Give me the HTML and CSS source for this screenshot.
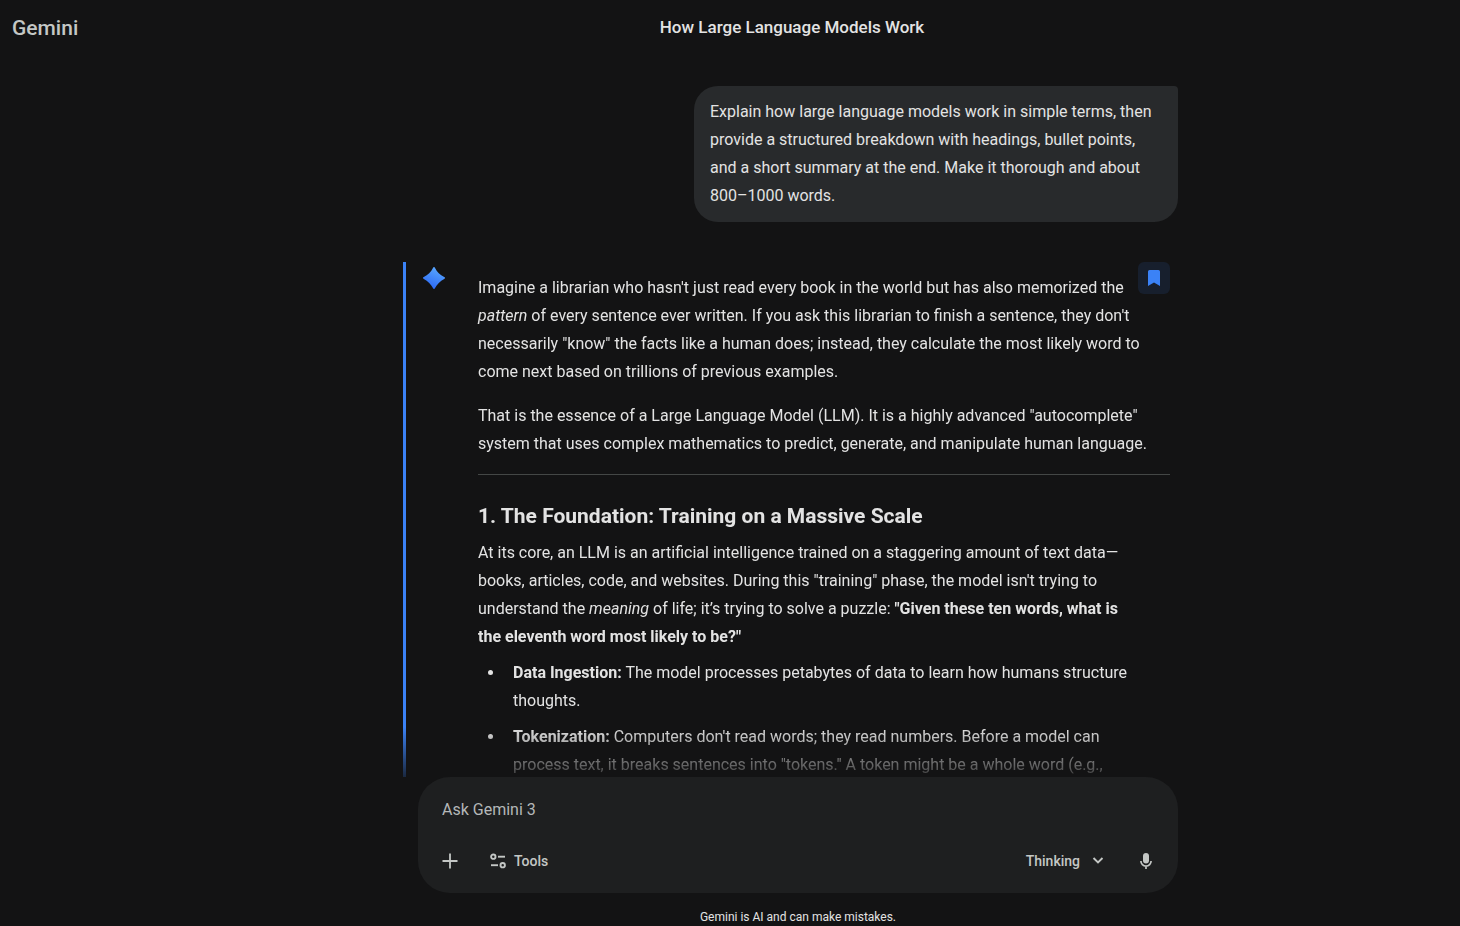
FILE: index.html
```html
<!DOCTYPE html>
<html lang="en">
<head>
    <meta charset="UTF-8">
    <meta name="viewport" content="width=device-width, initial-scale=1">
    <title>Gemini</title>
    <link rel="stylesheet" href="styles.css">
</head>
<body>
    <header class="topbar">
        <a class="logo" href="#">Gemini</a>
        <h1 class="chat-title">How Large Language Models Work</h1>
    </header>

    <main class="main">
        <section class="chat">
            <div class="chat-inner">
                <div class="user-message">
                    <p>Explain how large language models work in simple terms, then provide a structured breakdown with headings, bullet points, and a short summary at the end. Make it thorough and about 800–1000 words.</p>
                </div>

                <article class="response">
                    <svg class="spark" viewBox="0 0 24 24" aria-hidden="true">
                        <defs>
                            <linearGradient id="spark-fill" x1="0.3" y1="1" x2="0.7" y2="0">
                                <stop offset="0" stop-color="#2a66f5"/>
                                <stop offset="1" stop-color="#5aa9ff"/>
                            </linearGradient>
                        </defs>
                        <path fill="url(#spark-fill)" d="M12 1c.5 0 .8.3.9.8C15 5.900 18.100 9 22.200 11.100c.5.1.8.4.8.900s-.3.800-.8.900C18.100 15 15 18.100 12.900 22.200c-.1.500-.4.800-.9.800s-.8-.3-.9-.8C9 18.100 5.900 15 1.800 12.900c-.5-.1-.8-.4-.8-.9s.3-.8.8-.9C5.900 9 9 5.900 11.100 1.800c.1-.5.4-.8.9-.8z"/>
                    </svg>

                    <div class="response-text">
                        <p>Imagine a librarian who hasn't just read every book in the world but has also memorized the <em>pattern</em> of every sentence ever written. If you ask this librarian to finish a sentence, they don't necessarily "know" the facts like a human does; instead, they calculate the most likely word to come next based on trillions of previous examples.</p>
                        <p>That is the essence of a Large Language Model (LLM). It is a highly advanced "autocomplete" system that uses complex mathematics to predict, generate, and manipulate human language.</p>
                        <hr>
                        <h3>1. The Foundation: Training on a Massive Scale</h3>
                        <p>At its core, an LLM is an artificial intelligence trained on a staggering amount of text data—books, articles, code, and websites. During this "training" phase, the model isn't trying to understand the <em>meaning</em> of life; it’s trying to solve a puzzle: <b>"Given these ten words, what is<br>the eleventh word most likely to be?"</b></p>
                        <ul>
                            <li><b>Data Ingestion:</b> The model processes petabytes of data to learn how humans structure thoughts.</li>
                            <li><b>Tokenization:</b> Computers don't read words; they read numbers. Before a model can process text, it breaks sentences into "tokens." A token might be a whole word (e.g.,</li>
                        </ul>
                    </div>

                    <button class="bookmark" type="button" aria-label="Bookmark">
                        <svg width="16" height="16" viewBox="0 0 16 16" aria-hidden="true">
                            <path fill="#3b82f6" d="M3.500 0h9A1.500 1.500 0 0 1 14 1.500V16l-6-3.500L2 16V1.500A1.500 1.500 0 0 1 3.500 0z"/>
                        </svg>
                    </button>
                </article>
            </div>
        </section>

        <form class="composer">
            <input class="prompt" type="text" placeholder="Ask Gemini 3" aria-label="Ask Gemini 3">
            <div class="composer-row">
                <button class="icon-btn" type="button" aria-label="Add files">
                    <svg width="16" height="16" viewBox="0 0 16 16" fill="none" stroke="currentColor" stroke-width="1.800" aria-hidden="true">
                        <path d="M8 .500v15M.500 8h15"/>
                    </svg>
                </button>
                <button class="tools-btn" type="button">
                    <svg width="16" height="16" viewBox="0 0 16 16" fill="none" stroke="currentColor" stroke-width="1.900" aria-hidden="true">
                        <circle cx="3.300" cy="3.700" r="2.200"/>
                        <path d="M8 3.700h7"/>
                        <path d="M1 12.200h7"/>
                        <circle cx="12.700" cy="12.200" r="2.200"/>
                    </svg>
                    Tools
                </button>
                <button class="mode-btn" type="button" aria-haspopup="menu">
                    Thinking
                    <svg width="12" height="12" viewBox="0 0 12 12" fill="none" stroke="currentColor" stroke-width="1.900" aria-hidden="true">
                        <path d="M1.500 3 6 7.500 10.500 3"/>
                    </svg>
                </button>
                <button class="icon-btn" type="button" aria-label="Use microphone">
                    <svg width="12" height="16" viewBox="0 0 12 16" aria-hidden="true">
                        <rect x="3" y="0" width="6" height="10.500" rx="3" fill="currentColor"/>
                        <path d="M.900 8a5.100 5.100 0 0 0 10.200 0M6 13v3" fill="none" stroke="currentColor" stroke-width="1.700"/>
                    </svg>
                </button>
            </div>
        </form>

        <p class="disclaimer">Gemini is AI and can make mistakes.</p>
    </main>
</body>
</html>
```
FILE: styles.css
```css
* {
    box-sizing: border-box;
}
body {
    margin: 0;
    height: 100vh;
    display: flex;
    flex-direction: column;
    background: #131314;
    color: #e3e3e3;
    font-family: Roboto, "Open Sans", sans-serif;
    font-size: 16px;
    line-height: 28px;
    overflow: hidden;
}
p, h1, h3, ul {
    margin: 0;
}
button {
    display: flex;
    align-items: center;
    justify-content: center;
    padding: 0;
    border: none;
    background: none;
    color: #c4c7c5;
    font: inherit;
    cursor: pointer;
}

/* top bar */
.topbar {
    display: grid;
    grid-template-columns: 124px 1fr;
    align-items: center;
    height: 56px;
    flex: none;
}
.logo {
    padding-left: 12px;
    color: #c4c7c5;
    font-size: 21px;
    font-weight: 500;
    text-decoration: none;
}
.chat-title {
    padding-bottom: 2px;
    font-size: 17px;
    font-weight: 500;
    line-height: 28px;
    text-align: center;
}

/* conversation */
.main {
    flex: 1;
    min-height: 0;
    display: flex;
    flex-direction: column;
    align-items: center;
    padding-left: 136px;
}
.chat {
    flex: 1;
    min-height: 0;
    width: 100%;
    padding-top: 30px;
    overflow: hidden;
    -webkit-mask-image: linear-gradient(to bottom, #000 calc(100% - 50px), rgba(0, 0, 0, 0.2));
    mask-image: linear-gradient(to bottom, #000 calc(100% - 50px), rgba(0, 0, 0, 0.2));
}
.chat-inner {
    display: flex;
    flex-direction: column;
    gap: 40px;
    max-width: 760px;
    margin: 0 auto;
}
.user-message {
    align-self: flex-end;
    max-width: 484px;
    padding: 12px 16px;
    border-radius: 24px 4px 24px 24px;
    background: #282a2c;
}
.response {
    position: relative;
    display: flex;
    gap: 32px;
    margin: 0 8px 0 -15px;
    padding-left: 16px;
    border-left: 3px solid #3b82f6;
}
.spark {
    flex: none;
    width: 24px;
    height: 24px;
    margin-top: 4px;
}
.response-text {
    flex: 1;
    padding-top: 12px;
}
.response-text p,
.response-text li {
    padding-right: 20px;
}
.response-text p + p {
    margin-top: 16px;
}
.response-text hr {
    height: 1px;
    margin: 16px 0 26px;
    border: none;
    background: #444746;
}
.response-text h3 {
    margin-bottom: 8px;
    font-size: 21px;
    font-weight: 700;
    line-height: 30px;
}
.response-text ul {
    padding-left: 27px;
}
.response-text li {
    margin-top: 8px;
    padding-left: 8px;
}
.bookmark {
    position: absolute;
    top: 0;
    right: 0;
    width: 32px;
    height: 32px;
    border-radius: 6px;
    background: #171f2d;
}

/* prompt box */
.composer {
    width: 100%;
    max-width: 760px;
    flex: none;
    display: flex;
    flex-direction: column;
    gap: 17px;
    padding: 19px 12px 12px;
    border-radius: 32px;
    background: #1e1f20;
}
.prompt {
    width: 100%;
    height: 28px;
    padding: 0 12px;
    border: none;
    outline: none;
    background: none;
    color: #e3e3e3;
    font: inherit;
}
.prompt::placeholder {
    color: #b4b7b8;
    opacity: 1;
}
.composer-row {
    display: flex;
    align-items: center;
    font-size: 14px;
    font-weight: 500;
}
.icon-btn {
    width: 40px;
    height: 40px;
}
.tools-btn {
    gap: 8px;
    height: 40px;
    margin-left: 20px;
}
.mode-btn {
    gap: 12px;
    height: 40px;
    margin-left: auto;
    margin-right: 22px;
}
.disclaimer {
    flex: none;
    padding-top: 15px;
    font-size: 12px;
    line-height: 18px;
}
```
